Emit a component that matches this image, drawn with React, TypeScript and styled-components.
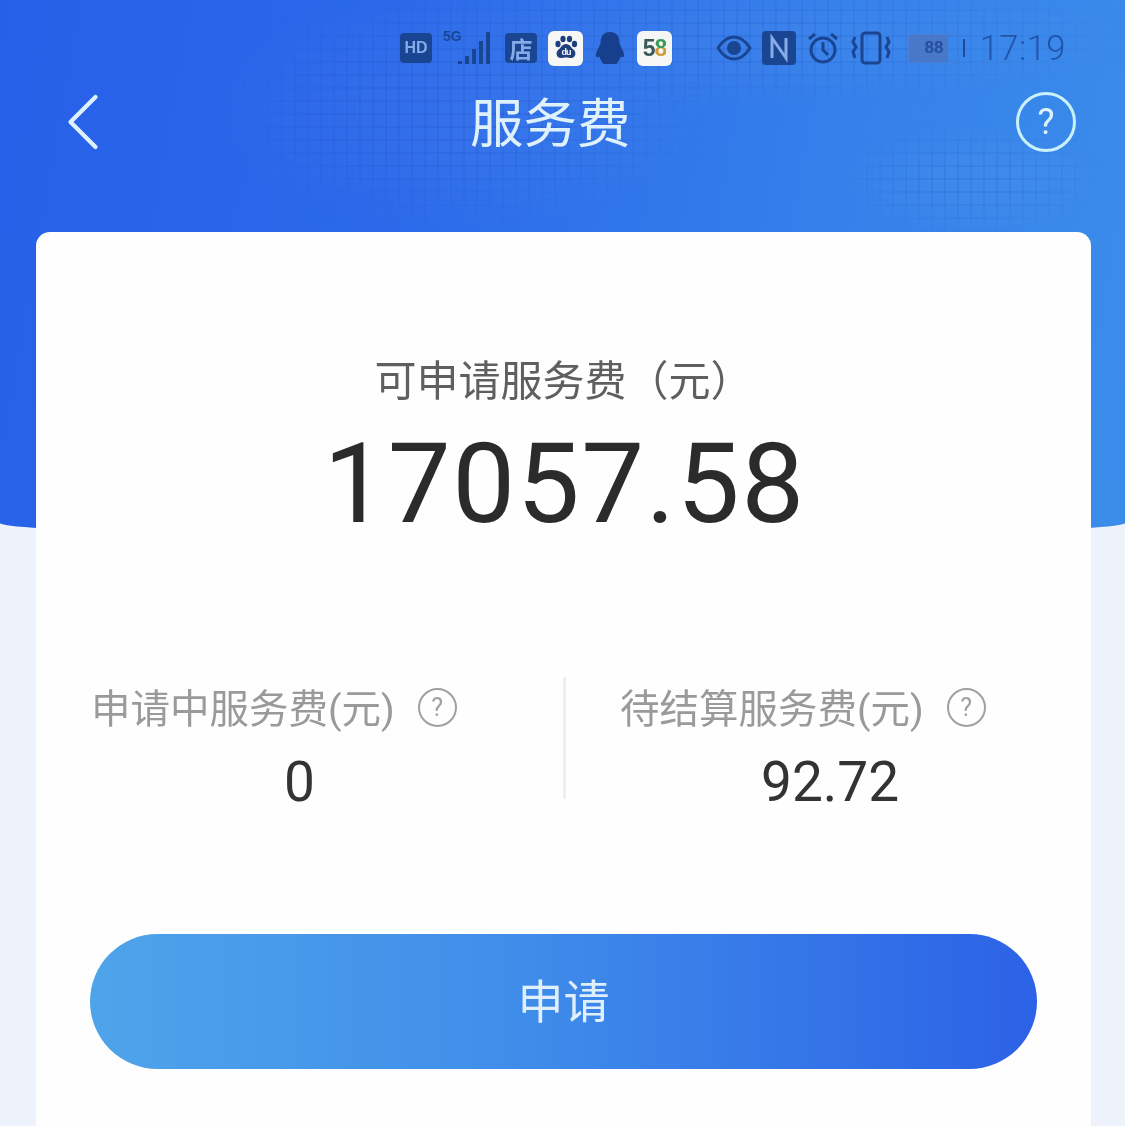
import styled, { createGlobalStyle } from "styled-components";
import { ChevronLeft } from "lucide-react";

const GlobalStyle = createGlobalStyle`
  html, body {
    margin: 0;
    padding: 0;
    background: #eef3fb;
  }
  * {
    box-sizing: border-box;
  }
`;

const Page = styled.div`
  position: relative;
  width: 1125px;
  height: 1126px;
  overflow: hidden;
  background: #eef2fa;
  font-family: "Roboto", "Noto Sans CJK SC", sans-serif;
  filter: blur(0.6px);
`;

const Hero = styled.div`
  position: absolute;
  top: 0;
  left: 0;
  width: 1125px;
  height: 537px;
  border-radius: 0 0 50% 50% / 0 0 14px 14px;
  background: linear-gradient(100deg, #2660e8 0%, #2b69ea 35%, #3480eb 70%, #3b8dea 100%);
`;

const HeroTexture = styled.div`
  position: absolute;
  top: 0;
  left: 190px;
  width: 935px;
  height: 232px;
  background-color: rgba(255, 255, 255, 0.04);
  background-image:
    repeating-linear-gradient(0deg, rgba(20, 60, 170, 0.12) 0 2px, transparent 2px 13px),
    repeating-linear-gradient(90deg, rgba(20, 60, 170, 0.12) 0 2px, transparent 2px 13px);
  mask-image:
    radial-gradient(ellipse 260px 130px at 270px 110px, #000 30%, transparent 100%),
    radial-gradient(ellipse 420px 70px at 560px 40px, #000 20%, transparent 100%),
    radial-gradient(ellipse 150px 60px at 780px 180px, #000 20%, transparent 100%);
`;

const Content = styled.div`
  position: relative;
  display: flex;
  flex-direction: column;
`;

const StatusBar = styled.div`
  height: 78px;
  padding: 28px 59px 0 400px;
  display: flex;
  align-items: flex-start;
  color: #17418f;
`;

const StatusGroup = styled.div<{ $gap: number; $indent?: number }>`
  display: flex;
  align-items: center;
  height: 40px;
  gap: ${(p) => p.$gap}px;
  margin-left: ${(p) => p.$indent ?? 0}px;
`;

const DarkBadge = styled.div<{ $size: number }>`
  width: 32px;
  height: 30px;
  border-radius: 4px;
  background: #1a4592;
  color: #86abe8;
  font: 700 ${(p) => p.$size}px "Liberation Sans", "Noto Sans CJK SC", sans-serif;
  display: flex;
  align-items: center;
  justify-content: center;
`;

const AppTile = styled.div`
  width: 35px;
  height: 35px;
  border-radius: 6px;
  background: #f6f7f4;
  display: flex;
  align-items: center;
  justify-content: center;
  font: 700 23px "Liberation Sans", sans-serif;
  letter-spacing: -1px;
`;

const Five = styled.span`
  color: #3b5a5c;
`;

const Eight = styled.span`
  color: transparent;
  background: linear-gradient(180deg, #3f9a58 0 48%, #d09a3a 48%);
  background-clip: text;
`;

const Battery = styled.div`
  width: 52px;
  height: 29px;
  margin-left: 6px;
  border: 1px solid #4b7fd8;
  border-radius: 3px;
  background: linear-gradient(90deg, #4a78c9 0 78%, transparent 78%);
  color: #244f9e;
  font: 700 17px "Liberation Sans", sans-serif;
  display: flex;
  align-items: center;
  justify-content: center;
`;

const BatteryTip = styled.div`
  width: 4px;
  height: 18px;
  margin: 11px 0 0 3px;
  background: #1f4a9b;
`;

const Time = styled.div`
  margin-left: 15px;
  font: 300 34.5px "Roboto", sans-serif;
  color: #2253aa;
  letter-spacing: 0.5px;
`;

const NavBar = styled.div`
  height: 88px;
  padding: 0 49px 0 58px;
  display: flex;
  align-items: center;
  justify-content: space-between;
  color: #dff2fb;
`;

const BackIcon = styled(ChevronLeft)`
  flex: none;
  margin-left: -25.5px;
`;

const NavTitle = styled.div`
  font-size: 53.5px;
  font-weight: 400;
  line-height: 1;
  margin: 6px 0 0 -48px;
`;

const HelpBadge = styled.div`
  width: 60px;
  height: 60px;
  border: 3px solid #c9f0fb;
  border-radius: 50%;
  display: flex;
  align-items: center;
  justify-content: center;
  font: 400 36px "Roboto", sans-serif;
`;

const Card = styled.div`
  margin: 66px 34px 0 36px;
  height: 920px;
  padding-top: 120px;
  background: #fefefe;
  border-radius: 14px;
  display: flex;
  flex-direction: column;
`;

const Summary = styled.div`
  display: flex;
  flex-direction: column;
  align-items: center;
`;

const SummaryLabel = styled.div`
  font-size: 42px;
  line-height: 52px;
  color: #5f5f5f;
  white-space: nowrap;
`;

const Paren = styled.span`
  font-family: "Noto Sans CJK TC", sans-serif;
`;

const Amount = styled.div`
  font-size: 112px;
  line-height: 122px;
  letter-spacing: 1.5px;
  color: #2b2b2b;
  margin-top: 15px;
  margin-left: 2px;
`;

const Stats = styled.div`
  display: flex;
  margin-top: 132px;
  height: 130px;
`;

const StatColumn = styled.div<{ $width: number; $pad: number }>`
  width: ${(p) => p.$width}px;
  padding-left: ${(p) => p.$pad}px;
  display: flex;
  flex-direction: column;
`;

const StatHead = styled.div`
  display: flex;
  align-items: center;
  gap: 23px;
  height: 60px;
`;

const StatLabel = styled.div`
  font-size: 39.5px;
  color: #9a9a9a;
  white-space: nowrap;
`;

const StatIcon = styled.div`
  width: 39px;
  height: 39px;
  margin-top: 4px;
  border: 2.5px solid #a0a0a0;
  border-radius: 50%;
  color: #a0a0a0;
  display: flex;
  align-items: center;
  justify-content: center;
  font: 400 25px "Roboto", sans-serif;
`;

const StatValue = styled.div<{ $offset: number }>`
  margin-top: 18px;
  padding-left: ${(p) => p.$offset}px;
  font-size: 55px;
  line-height: 60px;
  color: #333333;
`;

const Divider = styled.div`
  width: 3px;
  height: 122px;
  background: #efeff1;
`;

const Action = styled.button`
  margin: 127px 0 0 54px;
  width: 947px;
  height: 135px;
  border: none;
  border-radius: 68px;
  background: linear-gradient(90deg, #4ea4ea 0%, #3f8dea 45%, #2c62e6 100%);
  color: #dfeffb;
  font-family: "Noto Sans CJK SC", sans-serif;
  font-size: 46px;
  padding: 0 0 8px;
`;

function StatusIcons() {
  return (
    <>
      <StatusGroup $gap={11}>
        <DarkBadge $size={16}>HD</DarkBadge>
        <svg width="51" height="40" viewBox="0 0 51 40" fill="#1a4592">
          <text x="0" y="13" fontSize="14" fontWeight="700" fontFamily="Liberation Sans">5G</text>
          <rect x="15" y="33" width="4" height="3" />
          <rect x="22" y="28" width="4" height="8" />
          <rect x="29" y="21" width="4" height="15" />
          <rect x="36" y="13" width="4" height="23" />
          <rect x="43" y="4" width="4" height="32" />
        </svg>
        <DarkBadge $size={23}>店</DarkBadge>
        <AppTile>
          <svg width="30" height="30" viewBox="0 0 30 30" fill="#1d3f7e">
            <ellipse cx="7" cy="11" rx="2.6" ry="3.2" />
            <ellipse cx="12" cy="6" rx="2.6" ry="3.2" />
            <ellipse cx="18.5" cy="6" rx="2.6" ry="3.2" />
            <ellipse cx="23.5" cy="11" rx="2.6" ry="3.2" />
            <path d="M15 11c-4 0-5 4-8 6-3 3-1 9 4 8 3-.6 5-.6 8 0 5 1 7-5 4-8-3-2-4-6-8-6z" />
            <text x="15" y="22" textAnchor="middle" fontSize="9" fontWeight="700" fill="#f6f7f4" fontFamily="Liberation Sans">du</text>
          </svg>
        </AppTile>
        <svg width="32" height="36" viewBox="0 0 34 36" fill="#173f8d">
          <path d="M17 1c-7 0-10 5-10 11 0 3-4 8-5 13-.6 3 2 3.500 3.500 2 1 3 3 6 4.500 8h14c1.500-2 3.500-5 4.500-8 1.500 1.500 4 1 3.500-2-1-5-5-10-5-13 0-6-3-11-10-11z" />
        </svg>
        <AppTile>
          <Five>5</Five>
          <Eight>8</Eight>
        </AppTile>
      </StatusGroup>
      <StatusGroup $gap={10} $indent={44}>
        <svg width="36" height="26" viewBox="0 0 36 26" fill="none" stroke="#1a4592" strokeWidth="3">
          <path d="M2 13C7 5 12 2 18 2s11 3 16 11c-5 8-10 11-16 11S7 21 2 13z" />
          <circle cx="18" cy="13" r="5.500" fill="#1a4592" />
        </svg>
        <svg width="34" height="34" viewBox="0 0 34 34">
          <rect width="34" height="34" rx="4" fill="#1a4592" />
          <path d="M10 27V7l14 20V7" fill="none" stroke="#86abe8" strokeWidth="3" />
        </svg>
        <svg width="34" height="34" viewBox="0 0 34 34" fill="none" stroke="#1a4592" strokeWidth="3">
          <circle cx="17" cy="19" r="12" />
          <path d="M17 11v8l5 5M3 8l6-5M31 8l-6-5" />
        </svg>
        <svg width="42" height="34" viewBox="0 0 42 34" fill="none" stroke="#1a4592" strokeWidth="3">
          <rect x="12" y="2" width="18" height="30" rx="3" />
          <path d="M5 6l-2 5 3 5-3 5 2 6M37 6l2 5-3 5 3 5-2 6" />
        </svg>
        <Battery>88</Battery>
      </StatusGroup>
      <BatteryTip />
      <Time>17:19</Time>
    </>
  );
}

export default function App() {
  return (
    <Page>
      <GlobalStyle />
      <Hero>
        <HeroTexture />
      </Hero>
      <Content>
        <StatusBar>
          <StatusIcons />
        </StatusBar>
        <NavBar>
          <BackIcon size={100} strokeWidth={1} />
          <NavTitle>服务费</NavTitle>
          <HelpBadge>?</HelpBadge>
        </NavBar>
        <Card>
          <Summary>
            <SummaryLabel>
              可申请服务费<Paren lang="zh-Hant">（</Paren>元<Paren lang="zh-Hant">）</Paren>
            </SummaryLabel>
            <Amount>17057.58</Amount>
          </Summary>
          <Stats>
            <StatColumn $width={527} $pad={55}>
              <StatHead>
                <StatLabel>申请中服务费(元)</StatLabel>
                <StatIcon>?</StatIcon>
              </StatHead>
              <StatValue $offset={193}>0</StatValue>
            </StatColumn>
            <Divider />
            <StatColumn $width={520} $pad={54}>
              <StatHead>
                <StatLabel>待结算服务费(元)</StatLabel>
                <StatIcon>?</StatIcon>
              </StatHead>
              <StatValue $offset={141}>92.72</StatValue>
            </StatColumn>
          </Stats>
          <Action>申请</Action>
        </Card>
      </Content>
    </Page>
  );
}
